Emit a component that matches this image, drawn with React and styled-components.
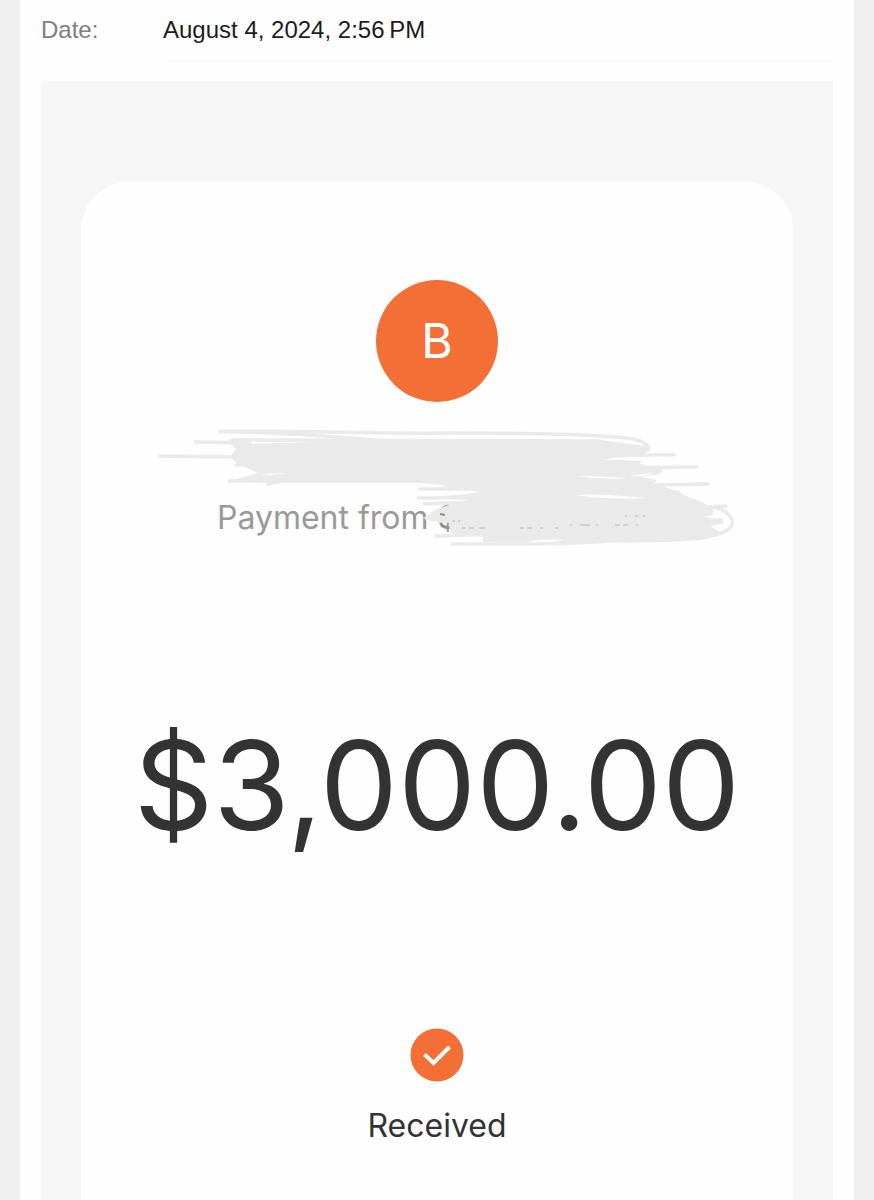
import React from "react";
import styled, { createGlobalStyle } from "styled-components";

const GlobalStyle = createGlobalStyle`
  * {
    box-sizing: border-box;
  }
  body {
    margin: 0;
    background-color: #f0f0f0;
    font-family: Inter, "Liberation Sans", sans-serif;
  }
`;

const Page = styled.main`
  min-height: 100vh;
  margin: 0 20px;
  padding: 0 21px;
  display: flex;
  flex-direction: column;
  background-color: #fefefe;
`;

const MetaRow = styled.dl`
  display: flex;
  margin: 0 0 19px;
  font-family: "Liberation Sans", Arial, sans-serif;
  font-size: 24px;
  line-height: 60px;
`;

const MetaLabel = styled.dt`
  width: 122px;
  color: #7f7f7f;
`;

const MetaValue = styled.dd`
  flex: 1;
  margin: 0;
  color: #1c1c1c;
  border-bottom: 2px solid #fbfbfb;
`;

const Panel = styled.section`
  flex: 1;
  display: flex;
  padding: 101px 40px 0;
  background-color: #f6f6f6;
`;

const Card = styled.article`
  flex: 1;
  display: flex;
  flex-direction: column;
  align-items: center;
  padding-top: 98px;
  background-color: #fefefe;
  border-radius: 48px 48px 0 0;
`;

const Avatar = styled.div`
  width: 122px;
  height: 122px;
  display: flex;
  align-items: center;
  justify-content: center;
  border-radius: 50%;
  background-color: #f36f36;
  color: #fefefe;
  font-size: 48px;
  line-height: 60px;
`;

const Sender = styled.div`
  position: relative;
  width: 100%;
  max-width: 600px;
  height: 135px;
  margin-top: 18px;
  padding-top: 78px;
`;

const SenderText = styled.p`
  width: 440px;
  margin: 0 auto;
  color: #999999;
  font-size: 32px;
  line-height: 40px;
`;

const Scribble = styled.svg`
  position: absolute;
  top: 0;
  left: 0;
  width: 100%;
  height: 100%;
`;

const Amount = styled.h1`
  margin: 152px 0 0;
  color: #333333;
  font-size: 124px;
  font-weight: 400;
  line-height: 156px;
`;

const StatusIcon = styled.svg`
  width: 54px;
  height: 54px;
  margin-top: 165px;
`;

const Status = styled.p`
  margin: 24px 0;
  color: #333333;
  font-size: 32px;
  line-height: 40px;
`;

const strokes = [
  "M220 431.5 C300 430 380 434 450 433 C530 433 600 434 633 439 Q650 443 648 450",
  "M220 431.5 C290 432 340 438 390 441",
  "M195 442 L250 443",
  "M231 440 L600 441",
  "M160 456 L240 457",
  "M236 465 L270 465",
  "M229 481 L300 480",
  "M268 484 L280 481",
  "M590 459 Q640 454 674 455",
  "M600 468 L697 467",
  "M600 475 Q645 477 661 471",
  "M600 486 L708 484",
  "M419 489 L560 489",
  "M418 498 Q450 499 520 489 L678 492",
  "M424 504 L520 500 L687 498",
  "M426 518 L455 517",
  "M690 508 L726 506",
  "M680 522 L721 520",
  "M436 536 L500 534",
  "M712 507 C728 509 737 521 730 528 C718 541 665 541 607 541 C560 545 500 544 452 544",
];

const textRemains = [
  "M452 521 h3 m3 0 h2",
  "M462 528 h4 m3 0 h5 m5 0 h6",
  "M520 528 h4 m3 0 h5 m8 0 h3 m12 0 h3",
  "M570 525 h2 m8 0 h10 m6 0 h2",
  "M615 525 h5 m3 0 h5 m8 0 h2",
  "M625 516 h2 m8 0 h3 m5 0 h2",
];

const App = () => {
  return (
    <>
      <GlobalStyle />
      <Page>
        <MetaRow>
          <MetaLabel>Date:</MetaLabel>
          <MetaValue>August 4, 2024, 2:56{"\u202f"}PM</MetaValue>
        </MetaRow>
        <Panel>
          <Card>
            <Avatar>B</Avatar>
            <Sender>
              <SenderText>Payment from $</SenderText>
              <Scribble viewBox="137 420 600 135" aria-hidden="true">
                <g fill="#eaeaea">
                  <path d="M231 444 L247 444 L383 440 L600 440 L646 446 L649 451 L640 455 Q615 456 603 459 L642 461 L640 464 L662 470 L657 474 Q640 473 630 475 L657 480 L650 488 L450 486 L420 483 L267 483 L232 482 L240 478 L258 473 L247 468 L238 464 L230 457 L236 449 Z" />
                  <path d="M438 486 L655 484 L679 492 L688 497 Q705 501 713 510 L713 515 L704 517 L722 520 L724 523 L710 526 L720 532 Q700 541 650 541 L607 541 L565 543 L483 542 L483 537 L450 533 L449 523 L430 521 L428 516 L434 510 L449 505 L470 500 L440 499 L480 492 Z" />
                </g>
                <g fill="none" stroke="#eaeaea" strokeWidth="3.5" strokeLinecap="round">
                  {strokes.map((d) => (
                    <path key={d} d={d} />
                  ))}
                </g>
                <g fill="#fefefe">
                  <path d="M603 460 Q620 456 641 457 Q630 460 603 460 Z" />
                  <path d="M577 476 Q600 476 627 478 Q610 480 577 476 Z" />
                  <path d="M630 475 Q645 475 655 472 Q645 478 630 475 Z" />
                  <path d="M259 474 L287 473 L270 475 Z" />
                  <path d="M573 495 Q600 493 645 498 Q610 500 573 495 Z" />
                  <path d="M527 542 Q545 538 565 540 Q550 543 527 542 Z" />
                  <path d="M441 494 Q452 491 475 492 Q455 496 441 494 Z" />
                </g>
                <g fill="none" stroke="#b4b4b4" strokeWidth="1">
                  {textRemains.map((d) => (
                    <path key={d} d={d} />
                  ))}
                </g>
                <path d="M440 514 l5 1 M441 525 l6 2" fill="none" stroke="#8c8c8c" strokeWidth="2" />
              </Scribble>
            </Sender>
            <Amount>$3,000.00</Amount>
            <StatusIcon viewBox="0 0 54 54" aria-hidden="true">
              <circle cx="27" cy="27" r="26.5" fill="#f36f36" />
              <path d="M14.5 26.5 L23.5 35 L39.5 19" fill="none" stroke="#fefefe" strokeWidth="4" />
            </StatusIcon>
            <Status>Received</Status>
          </Card>
        </Panel>
      </Page>
    </>
  );
};

export default App;
